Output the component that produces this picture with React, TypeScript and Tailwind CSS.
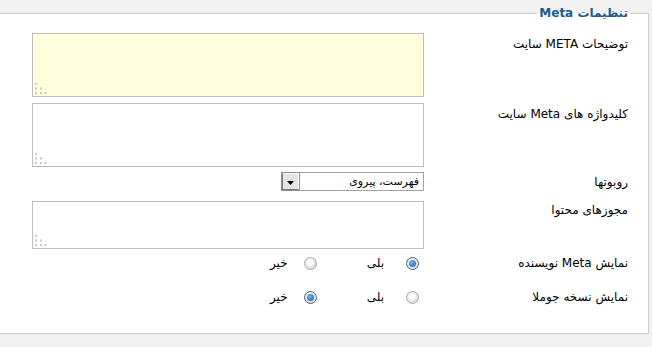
import React from "react";

const font = { fontFamily: '"DejaVu Sans", "Noto Sans", sans-serif' };

function Grip() {
  return (
    <svg className="absolute left-[1px] bottom-[2px]" width="14" height="12" viewBox="0 0 14 12">
      <rect x="1" y="1" width="2" height="2" fill="#c9c9bd" />
      <rect x="1" y="5.5" width="2" height="2" fill="#c9c9bd" />
      <rect x="6" y="5.5" width="2" height="2" fill="#c9c9bd" />
      <rect x="1" y="10" width="2" height="2" fill="#c9c9bd" />
      <rect x="6" y="10" width="2" height="2" fill="#c9c9bd" />
      <rect x="10.5" y="10" width="2" height="2" fill="#c9c9bd" />
    </svg>
  );
}

function Area({ h, yellow }: { h: string; yellow?: boolean }) {
  return (
    <div
      className={`relative w-[392px] border border-[#bdbdbd] ${h} ${yellow ? "bg-[#ffffdd]" : "bg-white"}`}
    >
      <Grip />
    </div>
  );
}

function Radio({ checked }: { checked?: boolean }) {
  if (checked) {
    return (
      <span className="flex h-[13px] w-[13px] shrink-0 items-center justify-center rounded-full border border-[#4d6275] bg-[radial-gradient(circle_at_50%_40%,#ffffff,#cfd8e0)]">
        <span className="block h-[7px] w-[7px] rounded-full bg-[radial-gradient(circle_at_40%_35%,#6fb6ef,#1c5d9c)]" />
      </span>
    );
  }
  return (
    <span className="block h-[13px] w-[13px] shrink-0 rounded-full border border-[#a8a8a8] bg-[radial-gradient(circle_at_45%_40%,#ffffff_20%,#e2e2e2_60%,#c8c8c8)]" />
  );
}

function RadioRow({ label, yes }: { label: string; yes: boolean }) {
  return (
    <div className="flex h-[22px] items-center">
      <div className="w-[206px] pr-[2px] text-[12px] leading-[16px] text-black">{label}</div>
      <div className="flex items-center pr-[5px] text-[12px] leading-[16px] text-black">
        <Radio checked={yes} />
        <span className="mr-[22px]">بلی</span>
        <span className="mr-[50px]">
          <Radio checked={!yes} />
        </span>
        <span className="mr-[16px]">خیر</span>
      </div>
    </div>
  );
}

export default function App() {
  return (
    <div dir="rtl" className="min-h-[347px] w-[652px] bg-[#f1f1f1] pt-[5px]" style={font}>
      <fieldset className="mr-[3px] w-[649px] border border-l-0 border-[#cccccc] bg-white pl-[31px] pr-[18px] pb-[25px]">
        <legend className="px-[2px] text-[12px] font-bold leading-[16px] text-[#1e5a8d]">تنظیمات Meta</legend>
        <div className="mt-[12px] flex">
          <div className="w-[206px] pr-[2px] pt-[3px] text-[12px] leading-[16px] text-black">توضیحات META سایت</div>
          <Area h="h-[64px]" yellow />
        </div>
        <div className="mt-[6px] flex">
          <div className="w-[206px] pr-[2px] pt-[3px] text-[12px] leading-[16px] text-black">کلیدواژه های Meta سایت</div>
          <Area h="h-[64px]" />
        </div>
        <div className="mt-[5px] flex items-center">
          <div className="w-[206px] pr-[2px] text-[12px] leading-[16px] text-black">روبوتها</div>
          <div className="flex w-[392px] justify-start">
            <div className="flex h-[19px] w-[143px] items-stretch border border-[#a5a5a5] bg-white">
              <div className="flex-1 pr-[4px] text-[11px] leading-[17px] text-black">فهرست، پیروی</div>
              <div className="flex w-[17px] items-center justify-center border border-t-[#ffffff] border-l-[#7a7a7a] border-b-[#7a7a7a] border-r-[#ffffff] bg-[#e4e4e4] outline outline-1 outline-[#8e8e8e]">
                <svg width="7" height="4" viewBox="0 0 7 4" className="mt-[2px]">
                  <path d="M0 0 H7 L3.5 4 Z" fill="#000" />
                </svg>
              </div>
            </div>
          </div>
        </div>
        <div className="mt-[10px] flex">
          <div className="w-[206px] pr-[2px] pt-[1px] text-[12px] leading-[16px] text-black">مجوزهای محتوا</div>
          <Area h="h-[48px]" />
        </div>
        <div className="mt-[3px]">
          <RadioRow label="نمایش Meta نویسنده" yes={true} />
        </div>
        <div className="mt-[12px]">
          <RadioRow label="نمایش نسخه جوملا" yes={false} />
        </div>
      </fieldset>
    </div>
  );
}
